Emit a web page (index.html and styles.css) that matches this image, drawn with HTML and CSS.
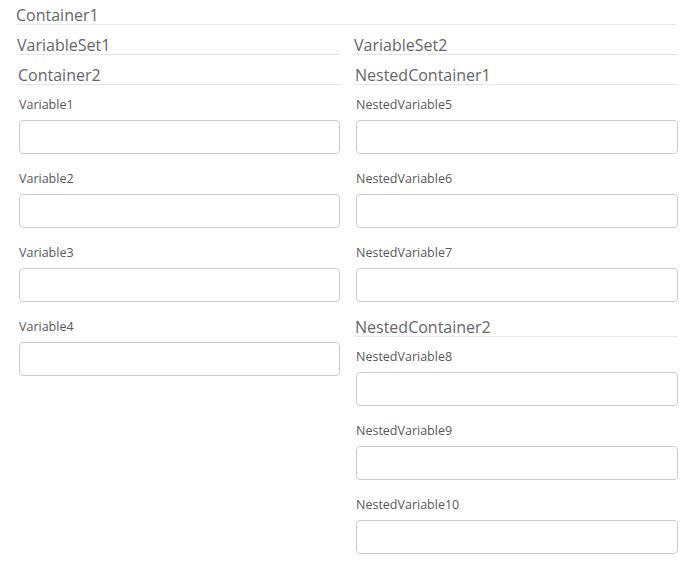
FILE: index.html
```html
<!DOCTYPE html>
<html>
<head>
<meta charset="utf-8">
<link rel="stylesheet" href="styles.css">
</head>
<body>
<div class="form">
  <div class="heading top">Container1</div>
  <div class="cols">
    <div class="col">
      <div class="heading">VariableSet1</div>
      <div class="group">
        <div class="heading">Container2</div>
        <div class="field"><div class="label">Variable1</div><div class="input"></div></div>
        <div class="field"><div class="label">Variable2</div><div class="input"></div></div>
        <div class="field"><div class="label">Variable3</div><div class="input"></div></div>
        <div class="field"><div class="label">Variable4</div><div class="input"></div></div>
      </div>
    </div>
    <div class="col">
      <div class="heading">VariableSet2</div>
      <div class="group">
        <div class="heading">NestedContainer1</div>
        <div class="field"><div class="label">NestedVariable5</div><div class="input"></div></div>
        <div class="field"><div class="label">NestedVariable6</div><div class="input"></div></div>
        <div class="field"><div class="label">NestedVariable7</div><div class="input"></div></div>
      </div>
      <div class="group second">
        <div class="heading">NestedContainer2</div>
        <div class="field"><div class="label">NestedVariable8</div><div class="input"></div></div>
        <div class="field"><div class="label">NestedVariable9</div><div class="input"></div></div>
        <div class="field"><div class="label">NestedVariable10</div><div class="input"></div></div>
      </div>
    </div>
  </div>
</div>
</body>
</html>
```
FILE: styles.css
```css
html, body {
  margin: 0;
  padding: 0;
  background: #ffffff;
}
body {
  font-family: "Open Sans", "Liberation Sans", sans-serif;
  color: #666666;
}
.form {
  margin-left: 16px;
  width: 660px;
}
.heading {
  font-size: 16px;
  line-height: 18px;
  padding-top: 11px;
  border-bottom: 1px solid #e6e6e6;
  color: #666666;
  white-space: nowrap;
}
.heading.top {
  padding-top: 6px;
}
.cols {
  display: grid;
  grid-template-columns: 323px 324px;
  column-gap: 14px;
  margin-left: 1px;
}
.col {
  display: flex;
  flex-direction: column;
}
.group {
  padding-left: 1px;
}
.group.second {
  margin-top: 5px;
}
.field {
  margin-top: 17px;
  padding-left: 1px;
}
.heading + .field {
  margin-top: 12px;
}
.label {
  font-size: 12.5px;
  line-height: 16px;
  color: #595959;
  margin-bottom: 7px;
}
.input {
  box-sizing: border-box;
  height: 34px;
  border: 1px solid #cccccc;
  border-radius: 4px;
  background: #ffffff;
}
```
